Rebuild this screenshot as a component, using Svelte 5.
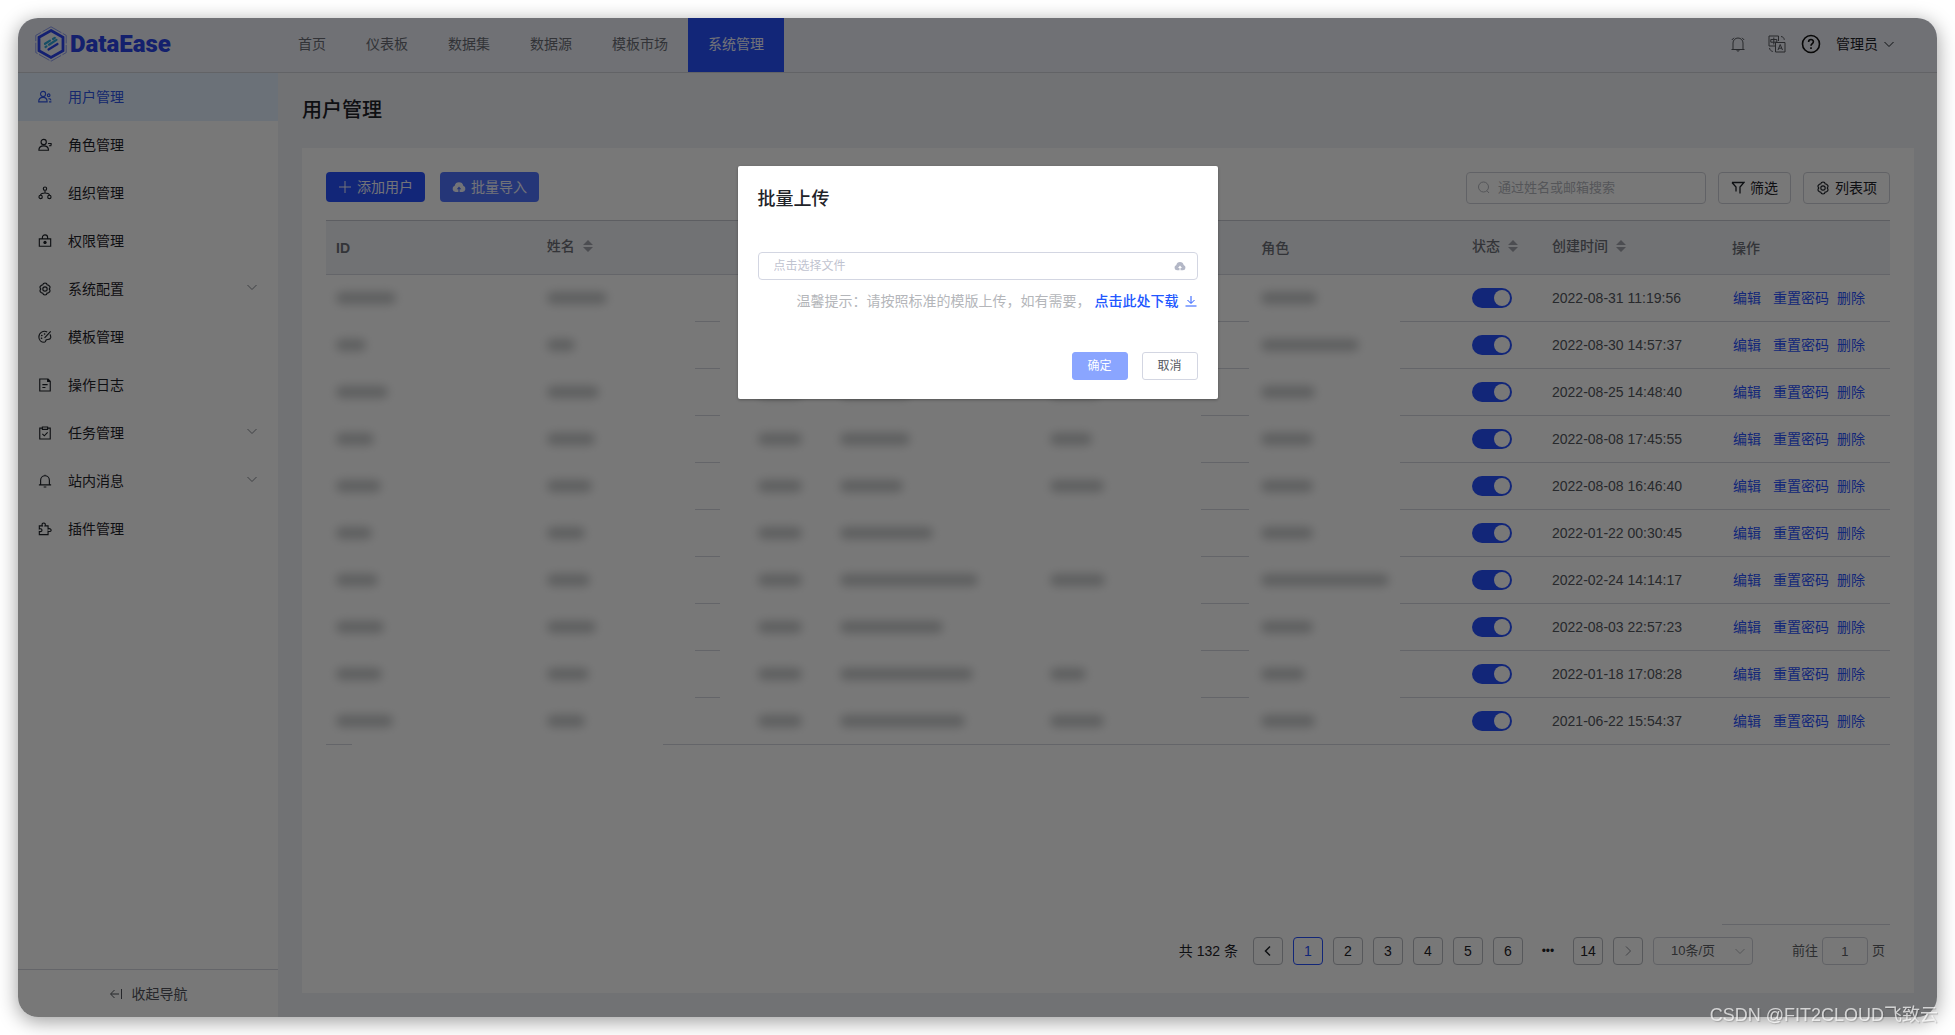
<script lang="ts">
  type IconName =
    | 'users' | 'role' | 'org' | 'lock' | 'gear' | 'palette' | 'doc' | 'task' | 'bell' | 'plugin';

  interface MenuItem {
    icon: IconName;
    label: string;
    group?: boolean;
  }

  interface UserRow {
    // widths of the masked values: id, name, source, email, nickname, role
    masked: number[];
    created: string;
  }

  const tabs = ['首页', '仪表板', '数据集', '数据源', '模板市场', '系统管理'];

  const menu: MenuItem[] = [
    { icon: 'users', label: '用户管理' },
    { icon: 'role', label: '角色管理' },
    { icon: 'org', label: '组织管理' },
    { icon: 'lock', label: '权限管理' },
    { icon: 'gear', label: '系统配置', group: true },
    { icon: 'palette', label: '模板管理' },
    { icon: 'doc', label: '操作日志' },
    { icon: 'task', label: '任务管理', group: true },
    { icon: 'bell', label: '站内消息', group: true },
    { icon: 'plugin', label: '插件管理' },
  ];

  const rows: UserRow[] = [
    { masked: [60, 60, 44, 70, 50, 56], created: '2022-08-31 11:19:56' },
    { masked: [30, 28, 44, 70, 50, 98], created: '2022-08-30 14:57:37' },
    { masked: [52, 52, 44, 70, 50, 54], created: '2022-08-25 14:48:40' },
    { masked: [38, 48, 44, 70, 42, 52], created: '2022-08-08 17:45:55' },
    { masked: [45, 45, 44, 63, 54, 52], created: '2022-08-08 16:46:40' },
    { masked: [36, 38, 44, 93, 0, 52], created: '2022-01-22 00:30:45' },
    { masked: [42, 43, 44, 138, 55, 128], created: '2022-02-24 14:14:17' },
    { masked: [48, 49, 44, 103, 0, 52], created: '2022-08-03 22:57:23' },
    { masked: [46, 42, 44, 133, 36, 44], created: '2022-01-18 17:08:28' },
    { masked: [57, 38, 44, 125, 54, 54], created: '2021-06-22 15:54:37' },
  ];

  const pages = [1, 2, 3, 4, 5, 6];

  let activeTab = $state('系统管理');
  let activeMenu = $state('用户管理');
  let currentPage = $state(1);
  let enabled = $state(rows.map(() => true));
  let open = $state(true);
  let keyword = $state('');
  let jumpTo = $state('1');
  let fileName = $state('');
</script>

{#snippet chevron(dir: string)}
  <svg class="chevron {dir}" viewBox="0 0 12 12" aria-hidden="true"><path d="M1.5 4 6 8.5 10.500 4" /></svg>
{/snippet}

{#snippet cloud()}
  <svg class="cloud" viewBox="0 0 14 14" aria-hidden="true">
    <path fill="currentColor" fill-rule="evenodd" d="M3.600 12A3.200 3.200 0 0 1 2.700 5.800a4.400 4.400 0 0 1 8.600 0A3.200 3.200 0 0 1 10.400 12H7.600V9.200h1.700L7 6.400 4.700 9.200h1.700V12Z" />
  </svg>
{/snippet}

{#snippet gear()}
  <path d="m6.200 1.800 1.800-.6 1.800.6.6 1.500 1.700.4 1.500 1.400.1 1.700-.9 1.200.9 1.300-.2 1.700-1.400 1.300-1.700.4-.7 1.600-1.700.5-1.800-.5-.7-1.600-1.600-.4-1.400-1.300-.2-1.700.9-1.300-.9-1.200.1-1.700 1.500-1.400 1.600-.4Z" />
  <circle cx="8" cy="8" r="2.500" />
{/snippet}

{#snippet menuIcon(name: IconName)}
  <svg class="icon" viewBox="0 0 16 16" aria-hidden="true">
    {#if name === 'users'}
      <circle cx="5.800" cy="4.500" r="2.900" />
      <path d="M.8 13.500c0-3.400 2-5 5-5s4.600 1.600 4.600 5Z" />
      <circle cx="12.200" cy="6" r="1.500" />
      <path d="M12 9.800c1.800 0 2.600.8 2.900 2M12.600 13.500h2.700" />
    {:else if name === 'role'}
      <circle cx="6.500" cy="4.500" r="3" />
      <path d="M1 14c0-3.200 2-5 5.500-5s5.500 1.800 5.500 5ZM11.500 6.300h4M12.500 8.800h2.200l.5-2.300" />
    {:else if name === 'org'}
      <circle cx="8" cy="3" r="1.900" />
      <circle cx="3" cy="12.500" r="1.900" />
      <circle cx="13" cy="12.500" r="1.900" />
      <path d="M8 5v3M3 10.500C3 8.500 5 8 8 8s5 .5 5 2.500" />
    {:else if name === 'lock'}
      <path d="M1.500 5.500h13v8.500h-13ZM5 5.500V4a3 3 0 0 1 6 0v1.500M8 8v3.500M6.500 9.700h3" />
      <circle cx="8" cy="9.700" r="1.200" />
    {:else if name === 'gear'}
      {@render gear()}
    {:else if name === 'palette'}
      <path d="M10.500 2.200A6.500 6.500 0 0 0 1 8c0 3.600 2.800 6 6 6 2.200 0 1.500-2 2.500-2.800 1.200-.9 4.500.6 5-2.400.2-1.500-.2-2.800-.9-3.800M14.500 1.500 7.500 9" />
      <path d="M4 9.500h.1M4.300 6.300h.1M7.500 4.500h.1" stroke-width="1.800" stroke-linecap="round" />
    {:else if name === 'doc'}
      <path d="M2 1.200h9.500L14 3.700v11.100H2ZM11 1.500V4h2.500M5 7.500h6M5 10.800h3.500" />
    {:else if name === 'task'}
      <path d="M5 2.500H2v12.300h12V2.500h-3M5 1.200h6v2.600H5ZM5 9l2.200 2.200L11 7.300" />
    {:else if name === 'bell'}
      <path d="M1 12.500h14M3 12.500V7a5 5 0 0 1 10 0v5.500M8 2V.8M6.500 14.800h3" />
    {:else}
      <path d="M1.500 4.500H5C4 2 5.200 1.200 6.500 1.200S9 2 8 4.500h3.500V8c2.500-1 3.500.2 3.500 1.300s-1 2.200-3.500 1.200v4h-10v-3.700c2.500.5 3-.5 3-1.500s-.8-2-3-1.300Z" />
    {/if}
  </svg>
{/snippet}

{#snippet sorter()}
  <svg class="sorter" viewBox="0 0 10 12" aria-hidden="true"><path d="M5 0l5 5H0ZM5 12 0 7h10Z" /></svg>
{/snippet}

<div class="window">
  <header class="topbar">
    <a class="logo" href="#home" aria-label="DataEase">
      <svg viewBox="0 0 32 36" aria-hidden="true">
        <path d="M16 .8 31.200 9.400v17.200L16 35.200.8 26.600V9.400Z" fill="none" stroke="#4a63e8" stroke-width=".6" stroke-dasharray="12 1.500" />
        <path d="M16 4.500 28 11.300v13.400L16 31.500 4 24.700V11.300Z" fill="none" stroke="#2b45f0" stroke-width="2.800" />
        <path d="m10 17.800 5-3.200M18 13l1.800-1.200M10.500 21l1-.6M14 18.700l7.500-4.800" stroke="#2fa6d8" stroke-width="2.200" stroke-linecap="round" />
        <path d="m13.500 23.500 9-5.500" stroke="#2b45f0" stroke-width="2.200" stroke-linecap="round" />
      </svg>
      <span>DataEase</span>
    </a>
    <nav class="tabs">
      {#each tabs as tab (tab)}
        <a href="#{tab}" class:active={activeTab === tab} onclick={() => { activeTab = tab; }}>{tab}</a>
      {/each}
    </nav>
    <div class="tools">
      <button class="tool" aria-label="消息">
        <svg viewBox="0 0 16 18" aria-hidden="true"><path d="M3 14.500V8a5 5 0 0 1 10 0v6.500M1.500 14.500h13M6.500 14.800 8 16.500l1.500-1.700M1.800 5 4 2.800M14.200 5 12 2.800" /></svg>
      </button>
      <button class="tool wide" aria-label="切换语言">
        <svg viewBox="0 0 20 20" aria-hidden="true">
          <path d="M8 12H2V2h9.500v5M3.800 5.500h6v2.700h-6ZM6.800 3.500v7M8.500 8.500H18V18H8.500ZM11 16l2.200-5.500L15.500 16M11.800 14.200h3M14 2.500c2 .3 3 1.300 3.300 3.300M2.500 14c.3 2 1.500 3 3.300 3.500" />
        </svg>
      </button>
      <button class="tool help" aria-label="帮助">
        <svg viewBox="0 0 20 20" aria-hidden="true">
          <circle cx="10" cy="10" r="8.500" />
          <path d="M7.600 8c0-3.200 4.800-3.200 4.800-.2 0 1.800-2.400 1.700-2.400 4M10 13.300v1.700" />
        </svg>
      </button>
      <button class="account">管理员 {@render chevron('small')}</button>
    </div>
  </header>

  <div class="body">
    <aside class="sidebar">
      <nav class="menu">
        {#each menu as item (item.label)}
          <a href="#{item.label}" class:active={activeMenu === item.label} onclick={() => { activeMenu = item.label; }}>
            {@render menuIcon(item.icon)}
            <span>{item.label}</span>
            {#if item.group}{@render chevron('group')}{/if}
          </a>
        {/each}
      </nav>
      <button class="collapse">
        <svg class="icon" viewBox="0 0 14 14" aria-hidden="true"><path d="M5.500 3 1.500 7l4 4M2 7h8M12.500 2v10" /></svg>
        收起导航
      </button>
    </aside>

    <main class="main">
      <h1>用户管理</h1>
      <section class="card">
        <div class="toolbar">
          <button class="btn primary">
            <svg class="plus" viewBox="0 0 14 14" aria-hidden="true"><path d="M7 1v12M1 7h12" /></svg>
            添加用户
          </button>
          <button class="btn primary light" onclick={() => { open = true; }}>{@render cloud()} 批量导入</button>
          <label class="search">
            <svg viewBox="0 0 14 14" aria-hidden="true"><circle cx="6.500" cy="6" r="5" /><path d="m10 9.800 2 2.200" /></svg>
            <input type="text" aria-label="搜索" placeholder="通过姓名或邮箱搜索" bind:value={keyword} />
          </label>
          <button class="btn plain">
            <svg viewBox="0 0 14 14" aria-hidden="true"><path d="M1 1.500h12L9 6v6.500M1 1.500 5 6v4.500" /></svg>
            筛选
          </button>
          <button class="btn plain">
            <svg viewBox="0 0 16 16" aria-hidden="true">{@render gear()}</svg>
            列表项
          </button>
        </div>

        <div class="table-wrap">
          <div class="mask left" aria-hidden="true"></div>
          <div class="mask left-end" aria-hidden="true"></div>
          <div class="mask middle" aria-hidden="true"></div>
          <div class="mask right" aria-hidden="true"></div>
          <table>
            <colgroup>
              <col /><col /><col class="c-source" /><col /><col /><col />
              <col class="c-status" /><col class="c-time" /><col class="c-action" />
            </colgroup>
            <thead>
              <tr>
                <th>ID</th>
                <th class="sortable">姓名 {@render sorter()}</th>
                <th></th>
                <th></th>
                <th></th>
                <th>角色</th>
                <th class="sortable">状态 {@render sorter()}</th>
                <th class="sortable">创建时间 {@render sorter()}</th>
                <th>操作</th>
              </tr>
            </thead>
            <tbody>
              {#each rows as row, i (i)}
                <tr>
                  {#each row.masked as width, c (c)}
                    <td><span class="smudge" style="width: {width}px"></span></td>
                  {/each}
                  <td><input class="switch" type="checkbox" role="switch" aria-label="状态" bind:checked={enabled[i]} /></td>
                  <td>{row.created}</td>
                  <td>
                    <div class="actions">
                      <a class="edit" href="#edit">编辑</a>
                      <a href="#reset">重置密码</a>
                      <a href="#delete">删除</a>
                    </div>
                  </td>
                </tr>
              {/each}
            </tbody>
          </table>
        </div>

        <div class="fixed-line"></div>
        <div class="pagination">
          <span class="total">共 132 条</span>
          <button aria-label="上一页">{@render chevron('prev')}</button>
          {#each pages as page (page)}
            <button class:current={currentPage === page} onclick={() => { currentPage = page; }}>{page}</button>
          {/each}
          <span class="dots">•••</span>
          <button onclick={() => { currentPage = 14; }}>14</button>
          <button class="muted" aria-label="下一页">{@render chevron('next')}</button>
          <label class="size">
            <select aria-label="每页条数">
              <option>10条/页</option>
              <option>20条/页</option>
            </select>
            {@render chevron('small')}
          </label>
          <label class="jump">前往 <input type="text" bind:value={jumpTo} /> 页</label>
        </div>
      </section>
    </main>
  </div>

  {#if open}
    <div class="overlay">
      <div class="dialog" role="dialog" aria-modal="true" aria-labelledby="dialog-title">
        <h2 id="dialog-title">批量上传</h2>
        <label class="file">
          <input type="text" aria-label="文件" placeholder="点击选择文件" readonly bind:value={fileName} />
          {@render cloud()}
        </label>
        <p class="tip">
          <span>温馨提示：请按照标准的模版上传，如有需要，</span>
          <a href="#template">
            点击此处下载
            <svg viewBox="0 0 12 12" aria-hidden="true"><path d="M6 1v7M2.500 5 6 8.500 9.500 5M.5 11h11" /></svg>
          </a>
        </p>
        <footer>
          <button class="confirm" disabled={!fileName}>确定</button>
          <button class="cancel" onclick={() => { open = false; }}>取消</button>
        </footer>
      </div>
    </div>
  {/if}
</div>
<div class="watermark">CSDN @FIT2CLOUD飞致云</div>

<style>
  :global(body) {
    background: #fff;
    overflow: hidden;
  }

  .window {
    --blue: #2851ff;
    --line: #d5d7e0;
    --text: #1f2329;
    position: relative;
    display: flex;
    flex-direction: column;
    min-height: calc(100vh - 36px);
    margin: 18px;
    border-radius: 20px;
    overflow: hidden;
    background: #f0f2f6;
    box-shadow: 0 4px 20px rgba(0, 0, 0, 0.4);
    color: var(--text);
    font: 14px/20px "Liberation Sans", "Noto Sans CJK SC", sans-serif;
  }

  .window *,
  .watermark {
    box-sizing: border-box;
  }

  button,
  input,
  select {
    margin: 0;
    padding: 0;
    border: 0;
    background: none;
    color: inherit;
    font: inherit;
    outline: none;
  }

  button { cursor: pointer; }

  a {
    color: inherit;
    text-decoration: none;
  }

  svg {
    flex: none;
    fill: none;
    stroke: currentColor;
  }

  .topbar {
    display: flex;
    height: 55px;
    border-bottom: 1px solid #d0d2d8;
    background: #eef0f8;
  }

  .logo {
    display: flex;
    align-items: center;
    gap: 3px;
    width: 260px;
    padding: 0 0 2px 17px;
    color: #2b45e8;
    font: 900 24px/32px Roboto, sans-serif;
  }

  .logo svg {
    width: 32px;
    height: 36px;
  }

  .tabs { display: flex; }

  .tabs a {
    padding: 16px 20px 18px;
    color: #6b6e76;
  }

  .tabs a.active {
    background: var(--blue);
    color: #f0f2ff;
  }

  .tools {
    display: flex;
    align-items: center;
    margin-left: auto;
    padding: 0 42px 2px 0;
  }

  .tool {
    display: flex;
    color: #55585f;
  }

  .tool svg {
    width: 16px;
    height: 18px;
  }

  .wide { margin: 0 14px 0 21px; }

  .wide svg,
  .help svg {
    width: 20px;
    height: 20px;
  }

  .help { color: #111; }
  .help svg { stroke-width: 1.6; }

  .account {
    display: flex;
    align-items: center;
    gap: 5px;
    margin-left: 15px;
  }

  .chevron {
    width: 12px;
    height: 12px;
  }

  .chevron.prev { transform: rotate(90deg); stroke-width: 1.5; }
  .chevron.next { transform: rotate(-90deg); }

  .body {
    display: flex;
    flex: 1;
  }

  .sidebar {
    display: flex;
    flex-direction: column;
    width: 260px;
    background: #fff;
  }

  .menu { flex: 1; }

  .menu a {
    display: flex;
    align-items: center;
    height: 48px;
    padding: 0 20px;
  }

  .menu a.active {
    background: #e4f1ff;
    color: #2f55e8;
  }

  .icon {
    width: 14px;
    height: 14px;
    margin-right: 16px;
    stroke-width: 1.3;
  }

  .chevron.group {
    margin: 0 0 4px auto;
    color: #85888f;
  }

  .collapse {
    display: flex;
    align-items: center;
    justify-content: center;
    height: 48px;
    border-top: 1px solid var(--line);
    color: #51545b;
  }

  .collapse .icon { margin-right: 9px; stroke-width: 1; }

  .main {
    display: flex;
    flex: 1;
    flex-direction: column;
    min-width: 0;
    padding: 22px 23px 24px 24px;
  }

  h1 {
    margin: 0 0 23px;
    font-size: 20px;
    font-weight: 500;
    line-height: 30px;
  }

  .card {
    display: flex;
    flex: 1;
    flex-direction: column;
    padding: 24px 24px 28px;
    background: #fff;
  }

  .toolbar {
    display: flex;
    gap: 12px;
    margin-bottom: 16px;
  }

  .btn {
    display: flex;
    align-items: center;
    gap: 5px;
    height: 32px;
    padding: 0 12px;
    border: 1px solid #cfd1d8;
    border-radius: 4px;
  }

  .btn svg {
    width: 14px;
    height: 14px;
    stroke-width: 1.3;
  }

  .btn.primary {
    height: 30px;
    margin-right: 3px;
    padding: 0 11px;
    border-color: transparent;
    background: var(--blue);
    color: #f3f4ff;
  }

  .btn.primary.light { background: #5073ff; }
  .btn .plus { stroke-width: 1; }

  .btn .cloud,
  .cloud {
    stroke: none;
  }

  .search {
    display: flex;
    align-items: center;
    gap: 7px;
    width: 240px;
    height: 32px;
    margin-left: auto;
    padding: 0 10px;
    border: 1px solid #cfd1d8;
    border-radius: 4px;
  }

  .search svg {
    width: 14px;
    height: 14px;
    color: #b5b7be;
  }

  .search input {
    flex: 1;
    min-width: 0;
    font-size: 13px;
  }

  .search input::placeholder {
    color: #b5b7be;
    opacity: 1;
  }

  .table-wrap { position: relative; }

  table {
    width: 100%;
    border-collapse: collapse;
    table-layout: fixed;
    color: #54575e;
  }

  .c-source { width: 82px; }
  .c-status { width: 80px; }
  .c-time { width: 180px; }
  .c-action { width: 168px; }

  th,
  td {
    padding: 0 10px;
    border-bottom: 1px solid var(--line);
    text-align: left;
  }

  th {
    height: 54px;
    border-top: 1px solid #c6c8d0;
    background: #f0f2f6;
    color: #6d7078;
    font-weight: bold;
  }

  th:not(:first-child) { font-weight: 500; }
  th.sortable { padding: 0 10px 4px; }

  td { height: 47px; }

  .sorter {
    width: 10px;
    height: 12px;
    margin-left: 4px;
    fill: #a2a5ad;
    stroke: none;
    vertical-align: -1px;
  }

  /* Patches that hide the row lines where values are masked. */
  .mask {
    position: absolute;
    top: 60px;
    bottom: 2px;
    background: #fff;
  }

  .mask.left { left: 0; width: 369px; }
  .mask.left-end { top: auto; bottom: 0; left: 26px; width: 311px; height: 4px; }
  .mask.middle { left: 394px; width: 481px; }
  .mask.right { left: 923px; width: 151px; }

  .smudge {
    position: relative;
    display: block;
    height: 12px;
    border-radius: 6px;
    background: #c8cacb;
    filter: blur(5px);
  }

  .switch {
    display: block;
    width: 40px;
    height: 20px;
    border-radius: 10px;
    background: #c0c4cc;
    appearance: none;
    cursor: pointer;
  }

  .switch::before {
    content: "";
    display: block;
    width: 16px;
    height: 16px;
    margin: 2px;
    border-radius: 50%;
    background: #fff;
  }

  .switch:checked { background: var(--blue); }
  .switch:checked::before { margin-left: 22px; }

  .actions {
    display: flex;
    gap: 8px;
    padding-left: 1px;
    color: #2b54ff;
  }

  .edit { margin-right: 4px; }

  .fixed-line {
    width: 168px;
    margin: auto 0 12px auto;
    border-top: 1px solid var(--line);
  }

  .pagination {
    display: flex;
    align-items: center;
    justify-content: flex-end;
    gap: 10px;
    padding-right: 5px;
  }

  .total { margin-right: 5px; }

  .pagination button {
    display: flex;
    align-items: center;
    justify-content: center;
    width: 30px;
    height: 28px;
    border: 1px solid #b9bbc2;
    border-radius: 4px;
  }

  .pagination .current {
    border-color: var(--blue);
    color: var(--blue);
  }

  .pagination .muted { color: #8a8d94; }

  .dots {
    width: 30px;
    font-size: 12px;
    text-align: center;
  }

  .size {
    display: flex;
    align-items: center;
    width: 100px;
    height: 28px;
    padding-right: 6px;
    border: 1px solid #cfd1d8;
    border-radius: 4px;
    color: #606266;
    font-size: 13px;
  }

  .size select {
    flex: 1;
    padding-left: 17px;
    appearance: none;
  }

  .size .chevron { color: #b5b7be; }

  .jump {
    display: flex;
    align-items: center;
    gap: 4px;
    margin-left: 29px;
    color: #606266;
    font-size: 13px;
  }

  .jump input {
    width: 46px;
    height: 28px;
    border: 1px solid #cfd1d8;
    border-radius: 4px;
    text-align: center;
  }

  .overlay {
    position: absolute;
    inset: 0;
    display: flex;
    align-items: flex-start;
    justify-content: center;
    padding-top: 148px;
    background: rgba(0, 0, 0, 0.53);
  }

  .dialog {
    width: 480px;
    padding: 20px 20px 19px;
    border-radius: 2px;
    background: #fff;
    box-shadow: 0 1px 3px rgba(0, 0, 0, 0.3);
  }

  h2 {
    margin: 0 0 40px;
    font-size: 18px;
    font-weight: 500;
    line-height: 26px;
  }

  .file {
    display: flex;
    align-items: center;
    height: 28px;
    padding: 0 11px 0 15px;
    border: 1px solid #d3d6e2;
    border-radius: 4px;
    color: #b3b7c6;
    font-size: 12px;
  }

  .file input { flex: 1; }

  .file input::placeholder {
    color: #bfc3d0;
    opacity: 1;
  }

  .cloud {
    width: 12px;
    height: 12px;
  }

  .tip {
    display: flex;
    justify-content: flex-end;
    gap: 4px;
    margin: 11px 0 41px;
    color: #b4b6ba;
  }

  .tip a {
    display: flex;
    align-items: center;
    gap: 6px;
    padding-right: 1px;
    color: #2257ff;
    font-weight: 500;
  }

  .tip svg {
    width: 12px;
    height: 12px;
  }

  footer {
    display: flex;
    justify-content: flex-end;
    gap: 14px;
  }

  footer button {
    width: 56px;
    height: 28px;
    border: 1px solid #d3d6e2;
    border-radius: 3px;
    color: #54575e;
    font-size: 12px;
  }

  .confirm {
    border-color: transparent;
    background: #2851ff;
    color: #fff;
  }

  .confirm:disabled { background: #8aa5ff; border-color: #8aa5ff; }

  .watermark {
    position: fixed;
    right: 17px;
    bottom: 6px;
    color: rgba(255, 255, 255, 0.7);
    font: 18px/28px "Liberation Sans", "Noto Sans CJK SC", sans-serif;
    text-shadow: 1px 1px 1px rgba(0, 0, 0, 0.2);
  }
</style>
